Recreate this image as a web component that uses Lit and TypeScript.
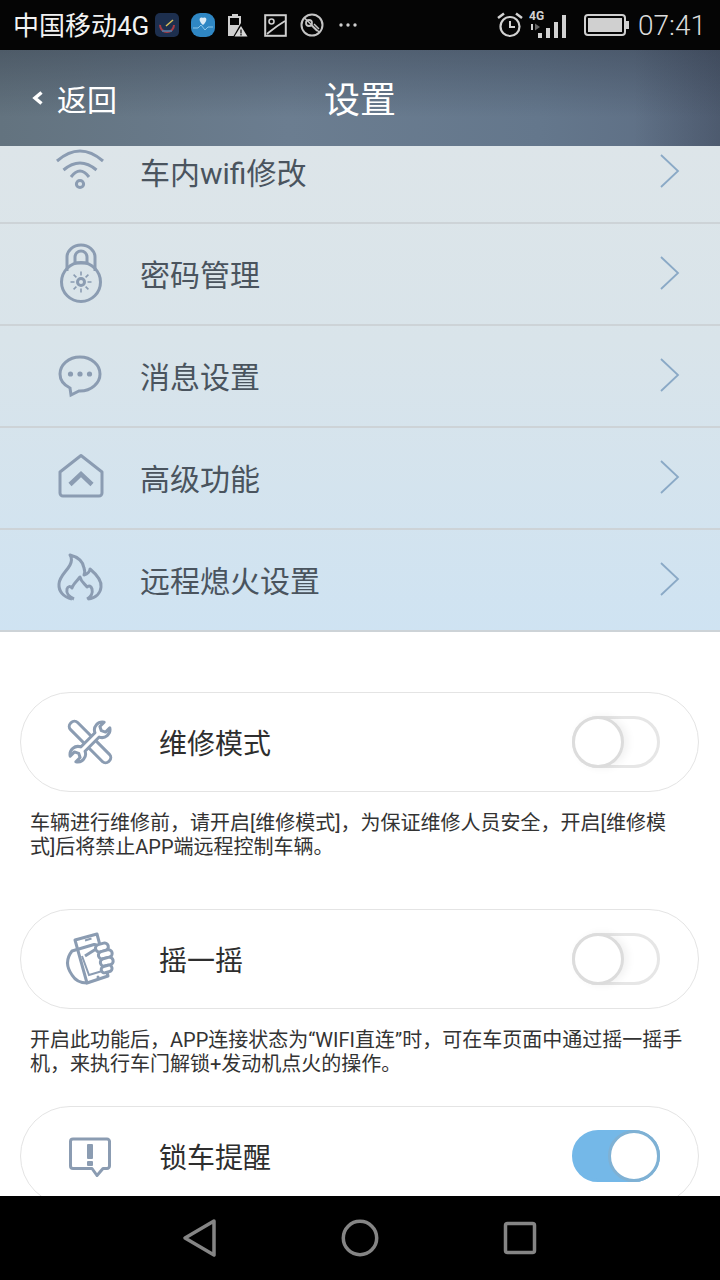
import { LitElement, html, css, svg } from "lit";
import { customElement, property } from "lit/decorators.js";

const chevronIcon = svg`<path d="M2 2 L19 18 L2 34" fill="none" stroke="#8aa9c6" stroke-width="1.800"/>`;

const menuIcons = {
  wifi: svg`
    <path d="M7 20 Q30 0 53 20" /><path d="M13.500 29 Q30 15 46.500 29" /><path d="M21 36 Q30 24 39 36" />
    <circle cx="30" cy="43" r="3.600" />`,
  lock: svg`
    <path d="M17 28 V14 a14 12 0 0 1 28 0 V28" />
    <path d="M25 20 v-6 a6 6 0 0 1 12 0 v6 z" />
    <circle cx="31" cy="39" r="19.500" />
    <circle cx="31" cy="39" r="3.500" />
    <path stroke-width="1.600" d="M31 28.500v4M31 45.500v4M20.500 39h4M37.500 39h4M23.600 31.600l2.800 2.800M35.600 43.600l2.800 2.800M23.600 46.400l2.800-2.800M35.600 34.400l2.800-2.800" />`,
  message: svg`
    <path d="M30 12 C18.500 12 10 20 10 29 C10 35 14 40 20 43 L21 50 L29 46 H30 C41.500 46 50 38 50 29 C50 20 41.500 12 30 12 Z" />
    <g class="solid"><circle cx="20.500" cy="29" r="2.600" /><circle cx="30" cy="29" r="2.600" /><circle cx="39.500" cy="29" r="2.600" /></g>`,
  home: svg`
    <path stroke-linejoin="round" d="M31 8.500 L52 25 V46 a3 3 0 0 1 -3 3 H13 a3 3 0 0 1 -3 -3 V25 Z" />
    <path stroke-width="4.500" d="M20 37.500 L31 27 L42 37.500" />`,
  flame: svg`
    <path stroke-linejoin="round" d="M22 50 C13 48 8.500 42 9 35 C9.500 27 17 22 20 16 C22 12 22 9 20 6 C28 8 33 13 34 19 C35 22 35 24 34 26 C38 25 40 22 40 20 C46 25 52 31 51 38 C50.500 44 46 49 38 50" />
    <path stroke-linejoin="round" d="M24 50 C19 48 16 44 17 40 C18 37 20 37 22 39 C23 35 27 32 30 28 C31 33 35 35 37 38 C39 36 41 37 42 40 C43 44 41 48 37 50" />`,
};

const cardIcons = {
  tools: svg`
    <g transform="rotate(-45 30 30)"><rect x="25" y="3" width="10" height="54" rx="4.500" /></g>
    <g transform="rotate(45 30 30)" class="masked"><path stroke-linejoin="round" d="M27 20 A8 8 0 0 1 26 6 V12 L30 14 L34 12 V6 A8 8 0 0 1 33 20 V40 A8 8 0 0 1 34 54 V48 L30 46 L26 48 V54 A8 8 0 0 1 27 40 Z" /></g>`,
  shake: svg`
    <path class="masked" stroke-linejoin="round" d="M15 11 L37 5 L48 47 L27 54 Z" />
    <path stroke-width="2" d="M25 11.500 L31.500 9.500 M22 27 L29 46 L44 41.500" />
    <circle class="solid" cx="38" cy="48" r="1.500" />
    <path stroke-linejoin="round" d="M27 54 C20 54 15 51 12 46 C7 39 5 31 12 22 L34 15.500 C37 15 38 18 36 20 L25 27" />
    <g class="masked" transform="rotate(-15 46 28)">
      <rect x="38" y="14" width="13" height="7.500" rx="3.700" />
      <rect x="39" y="21.500" width="14" height="7.500" rx="3.700" />
      <rect x="39" y="29" width="13" height="7.500" rx="3.700" />
      <rect x="38" y="36.500" width="11" height="6.500" rx="3.200" />
    </g>`,
  alert: svg`
    <path stroke-linejoin="round" d="M13 13 H47 a2.500 2.500 0 0 1 2.500 2.500 V40 a2.500 2.500 0 0 1 -2.500 2.500 H43 L37 49.500 L32 42.500 H13 a2.500 2.500 0 0 1 -2.500 -2.500 V15.500 a2.500 2.500 0 0 1 2.500 -2.500 Z" />
    <g class="solid"><rect x="27" y="18" width="6" height="15" rx="1" /><rect x="27" y="35" width="6" height="5" rx="1" /></g>`,
};

@customElement("set-toggle")
class SetToggle extends LitElement {
  @property({ type: Boolean }) on = false;
  static styles = css`
    :host { display: block; }
    .track {
      width: 88px; height: 52px; box-sizing: border-box; border-radius: 26px;
      border: 3px solid #e6e6e6; background: #fff; position: relative;
    }
    .track.on { background: #74b8e8; border-color: #74b8e8; }
    .knob {
      position: absolute; left: -3px; top: -3px; width: 52px; height: 52px; box-sizing: border-box;
      border-radius: 50%; background: #fff; border: 3px solid #dcdcdc;
      box-shadow: 4px 0 8px rgba(0, 0, 0, 0.06);
    }
    .on .knob { left: auto; right: -3px; border-color: #7fb1d4; box-shadow: none; }
  `;
  render() {
    return html`<div class="track ${this.on ? "on" : ""}"><div class="knob"></div></div>`;
  }
}

@customElement("app-root")
export class AppRoot extends LitElement {
  static styles = css`
    :host {
      display: flex; flex-direction: column; width: 720px; height: 1280px; overflow: hidden;
      font-family: Roboto, "Noto Sans CJK SC", sans-serif; background: #fff;
    }
    .status {
      flex: none; height: 50px; background: #050505; color: #e8e8e8;
      display: flex; align-items: center; padding: 0 14px 0 13px; box-sizing: border-box;
    }
    .carrier { font-size: 26px; line-height: 50px; padding-top: 2px; width: 142px; white-space: nowrap; color: #f2f2f2; }
    .status svg { flex: none; display: block; }
    .notif { display: flex; align-items: center; gap: 12px; }
    .sys { margin-left: auto; display: flex; align-items: center; }
    .time { font-size: 28px; font-weight: 300; color: #dcdcdc; margin-left: 9px; }

    .header {
      flex: none; height: 96px; position: relative; color: #fff; display: flex; align-items: center; justify-content: center;
      background:
        linear-gradient(180deg, rgba(40, 48, 62, 0.36) 0%, rgba(40, 48, 62, 0) 70%),
        linear-gradient(90deg, rgba(50, 58, 75, 0) 88%, rgba(50, 58, 75, 0.35) 100%),
        linear-gradient(90deg, #63737f 0%, #6b7d90 40%, #64778c 75%, #5c6c82 100%);
    }
    .title { font-size: 36px; line-height: 96px; padding-top: 5px; }
    .back {
      position: absolute; left: 32px; top: 0; height: 96px; display: flex; align-items: center; gap: 13px;
      font-size: 30px;
    }

    .menu {
      flex: none; height: 486px; overflow: hidden; box-sizing: border-box;
      background: linear-gradient(180deg, #dde5e9 0%, #d9e4ea 40%, #cfe3f2 100%);
    }
    .rows { margin-top: -24px; }
    .row {
      height: 102px; box-sizing: border-box; border-bottom: 2px solid #cdd3d7;
      display: flex; align-items: center; padding: 0 39px 2px 50px; color: #4a545e; font-size: 30px;
    }
    .row .ico { width: 60px; height: 60px; flex: none; margin-right: 30px; }
    .row .lbl { flex: 1; }
    .row .chev { width: 22px; height: 36px; flex: none; }
    .ico { fill: none; stroke: #8b9cb2; stroke-width: 3; }
    .ico .solid { fill: #8b9cb2; stroke: none; }
    .ico .masked { fill: #fff; }

    .body { flex: 1; min-height: 0; overflow: hidden; padding: 60px 0 0 20px; box-sizing: border-box; }
    .card {
      width: 679px; height: 100px; box-sizing: border-box; border: 1.500px solid #e4e4e4; border-radius: 50px;
      display: flex; align-items: center; padding: 0 38px 0 39px;
      font-size: 28px; color: #2e2e2e; background: #fff;
    }
    .card .ico { width: 60px; height: 60px; flex: none; margin-right: 41px; }
    .card .lbl { flex: 1; margin-left: -2px; }
    .note {
      width: 656px; margin: 19px 0 0 10px; font-size: 20px; line-height: 24px; color: #333;
      min-height: 98px;
    }
    .note.tight { min-height: 78px; }

    .nav {
      flex: none; height: 84px; background: #000; display: flex; align-items: center; justify-content: center;
    }
    .nav svg { display: block; fill: none; stroke: #858585; stroke-width: 3.500; }
    .nav .slot { width: 160px; display: flex; justify-content: center; }
  `;

  private menuRow(icon: unknown, label: string) {
    return html`<div class="row">
      <svg class="ico" viewBox="0 0 60 60">${icon}</svg>
      <span class="lbl">${label}</span>
      <svg class="chev" viewBox="0 0 22 36">${chevronIcon}</svg>
    </div>`;
  }

  private card(icon: unknown, label: string, on = false) {
    return html`<div class="card">
      <svg class="ico" viewBox="0 0 60 60">${icon}</svg>
      <span class="lbl">${label}</span>
      <set-toggle ?on=${on}></set-toggle>
    </div>`;
  }

  render() {
    return html`
      <div class="status">
        <span class="carrier">中国移动4G</span>
        <div class="notif">
          <svg width="24" height="24" viewBox="0 0 24 24">
            <rect width="24" height="24" rx="5" fill="#1d2f4e" />
            <circle cx="12" cy="12" r="7" fill="none" stroke="#a83c44" stroke-width="2" stroke-dasharray="22 30" />
            <path d="M11 13 L18 7" stroke="#d8c05a" stroke-width="1.500" />
            <path d="M7 18h10" stroke="#4c7fa8" stroke-width="1.500" />
          </svg>
          <svg width="24" height="24" viewBox="0 0 24 24">
            <rect width="24" height="24" rx="9" fill="#2f87c4" />
            <path d="M12 12 C7 8 8 3 12 5 C16 3 17 8 12 12 Z" fill="#dcebf5" />
            <path d="M2 15 h5 l3 -3 l4 5 l3 -3 h5" fill="none" stroke="#8cc6ea" stroke-width="1" />
          </svg>
          <svg width="22" height="24" viewBox="0 0 22 24">
            <path d="M5 3V1h6v2h3v20H1V3Z" fill="#cfcfcf" />
            <path d="M3 5h9v7H3Z" fill="#050505" />
            <path d="M14 10 L22 24 H6 Z" fill="#050505" />
            <path d="M14 13 L20.500 23.500 H7.500 Z" fill="#d8d8d8" />
            <path d="M13.400 16.500h1.200v4h-1.200z M13.400 21h1.200v1.500h-1.200z" fill="#050505" />
          </svg>
          <svg width="23" height="23" viewBox="0 0 23 23" style="margin-left:3px">
            <rect x="1.200" y="1.200" width="20.600" height="20.600" fill="none" stroke="#cfcfcf" stroke-width="2" />
            <circle cx="7.500" cy="7.500" r="2.500" fill="none" stroke="#cfcfcf" stroke-width="1.600" />
            <path d="M3 20 C8 16 11 13 21 7" fill="none" stroke="#cfcfcf" stroke-width="1.800" />
          </svg>
          <svg width="24" height="24" viewBox="0 0 24 24" style="margin-left:1px">
            <circle cx="12" cy="12" r="10.500" fill="none" stroke="#c4c4c4" stroke-width="2" />
            <circle cx="9" cy="10" r="3" fill="none" stroke="#c4c4c4" stroke-width="1.800" />
            <path d="M11 12 L17 18 M14 11 L19 16 M4.500 5 L19 19" fill="none" stroke="#c4c4c4" stroke-width="1.500" />
          </svg>
          <svg width="20" height="6" viewBox="0 0 20 6" style="margin-left:2px">
            <circle cx="3" cy="3" r="1.700" fill="#cfcfcf" /><circle cx="10" cy="3" r="1.700" fill="#cfcfcf" /><circle cx="17" cy="3" r="1.700" fill="#cfcfcf" />
          </svg>
        </div>
        <div class="sys">
          <svg width="26" height="26" viewBox="0 0 26 26" style="margin-right:6px">
            <circle cx="13" cy="14.500" r="9.500" fill="none" stroke="#d2d2d2" stroke-width="2.200" />
            <path d="M13 9v6h5" fill="none" stroke="#d2d2d2" stroke-width="2" />
            <path d="M1 6 L7 1.500 M25 6 L19 1.500" fill="none" stroke="#d2d2d2" stroke-width="2.500" />
          </svg>
          <svg width="40" height="30" viewBox="0 0 40 30" style="margin-right:15px">
            <text x="0" y="10" font-family="Roboto, sans-serif" font-size="12" font-weight="700" fill="#d2d2d2">4G</text>
            <path d="M2 14 h2 v6 h-2 Z" fill="#d2d2d2" /><path d="M6 13.500 L11 17 L6 20.500 Z" fill="#666" />
            <rect x="9" y="23" width="4" height="5" fill="#d2d2d2" /><rect x="17" y="18" width="4" height="10" fill="#d2d2d2" />
            <rect x="25" y="12" width="4" height="16" fill="#d2d2d2" /><rect x="33" y="5" width="4" height="23" fill="#d2d2d2" />
          </svg>
          <svg width="45" height="22" viewBox="0 0 45 22">
            <rect x="1" y="1" width="40" height="20" rx="3" fill="none" stroke="#d0d0d0" stroke-width="2" />
            <rect x="4" y="4" width="34" height="14" fill="#d0d0d0" />
            <rect x="42" y="7" width="3" height="8" fill="#d0d0d0" />
          </svg>
          <span class="time">07:41</span>
        </div>
      </div>

      <div class="header">
        <div class="back">
          <svg width="12" height="14" viewBox="0 0 12 14"><path d="M9.500 1.500 L3 7 L9.500 12.500" fill="none" stroke="#fff" stroke-width="3.500" /></svg>
          <span>返回</span>
        </div>
        <span class="title">设置</span>
      </div>

      <div class="menu">
        <div class="rows">
          ${this.menuRow(menuIcons.wifi, "车内wifi修改")}
          ${this.menuRow(menuIcons.lock, "密码管理")}
          ${this.menuRow(menuIcons.message, "消息设置")}
          ${this.menuRow(menuIcons.home, "高级功能")}
          ${this.menuRow(menuIcons.flame, "远程熄火设置")}
        </div>
      </div>

      <div class="body">
        ${this.card(cardIcons.tools, "维修模式")}
        <div class="note">车辆进行维修前，请开启[维修模式]，为保证维修人员安全，开启[维修模式]后将禁止APP端远程控制车辆。</div>
        ${this.card(cardIcons.shake, "摇一摇")}
        <div class="note tight">开启此功能后，APP连接状态为“WIFI直连”时，可在车页面中通过摇一摇手机，来执行车门解锁+发动机点火的操作。</div>
        ${this.card(cardIcons.alert, "锁车提醒", true)}
      </div>

      <div class="nav">
        <div class="slot"><svg width="36" height="40" viewBox="0 0 36 40"><path stroke-linejoin="round" d="M32 3 L3 20 L32 37 Z" /></svg></div>
        <div class="slot"><svg width="40" height="40" viewBox="0 0 40 40"><circle cx="20" cy="20" r="16.700" /></svg></div>
        <div class="slot"><svg width="36" height="36" viewBox="0 0 36 36"><rect x="3.500" y="3.500" width="29" height="29" rx="2" /></svg></div>
      </div>
    `;
  }
}
